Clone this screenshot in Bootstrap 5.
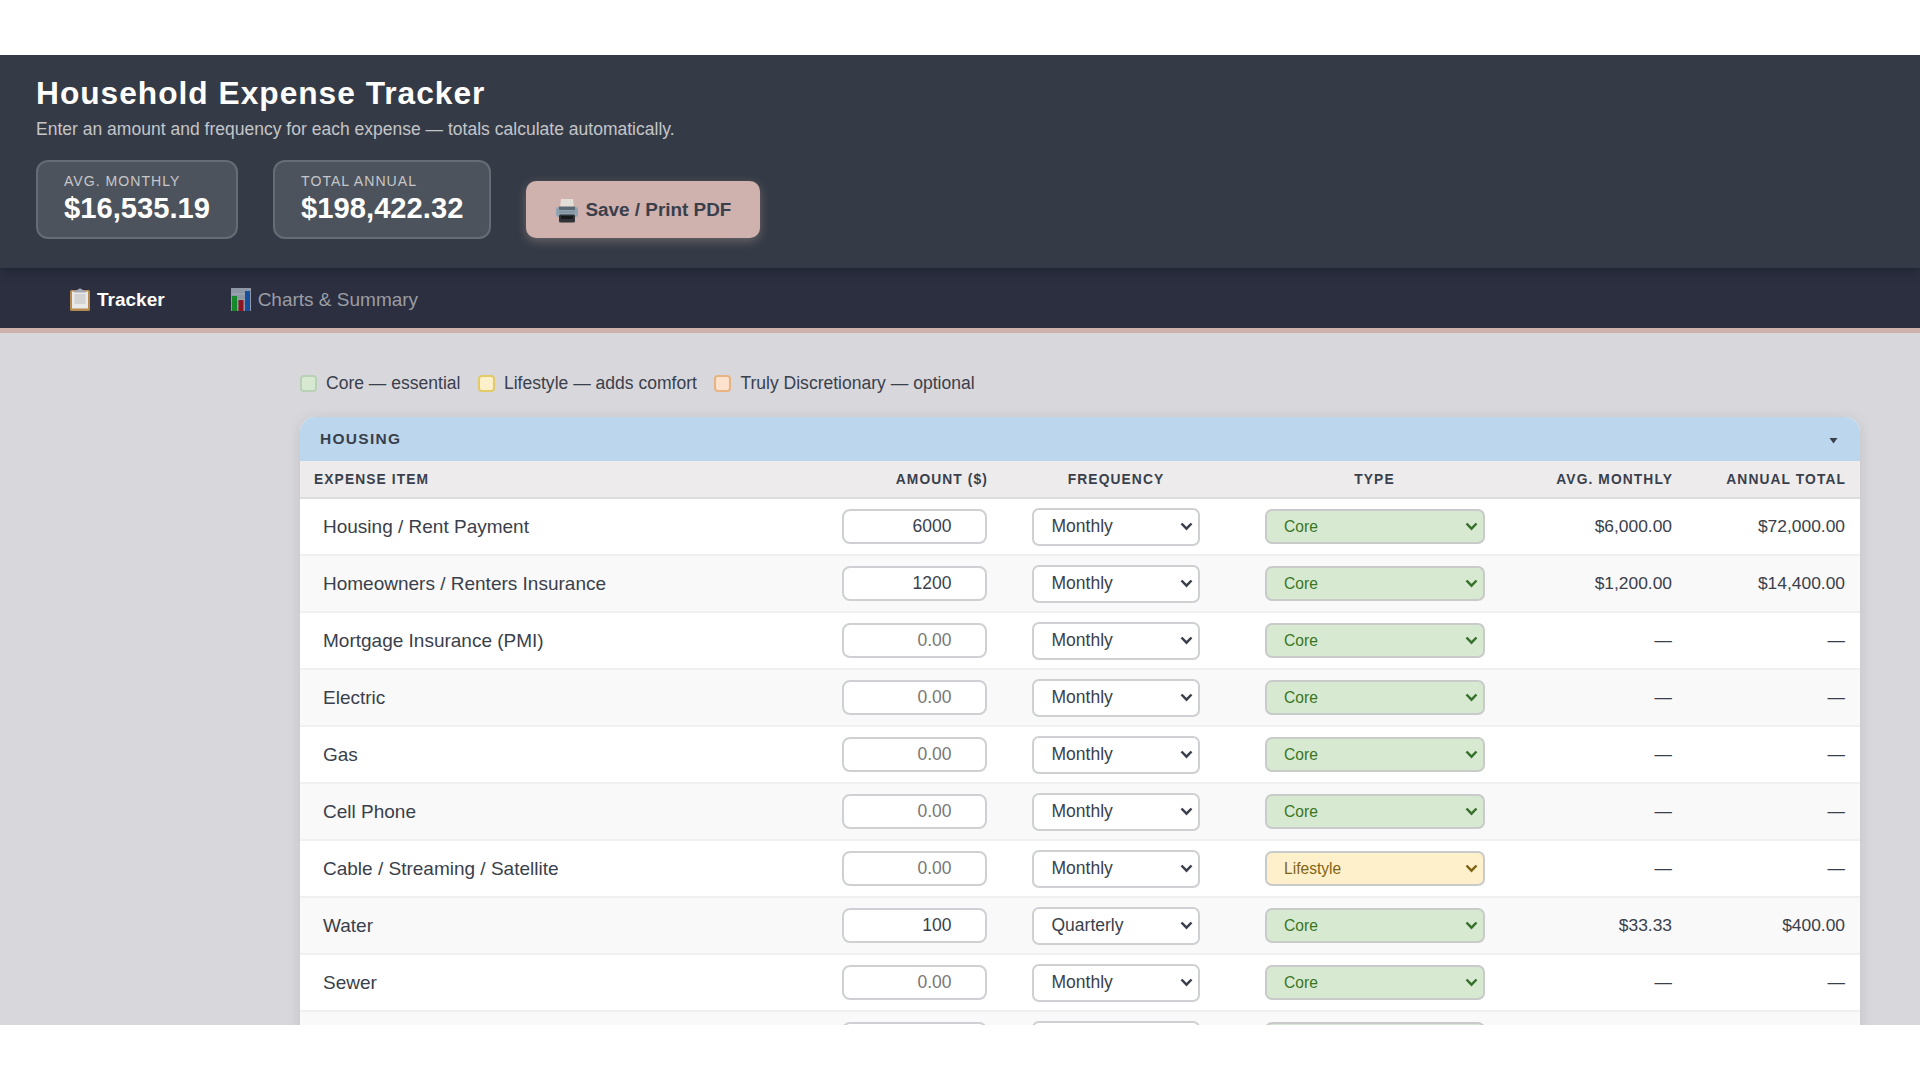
<!DOCTYPE html>
<html lang="en">
<head>
<meta charset="utf-8">
<title>Household Expense Tracker</title>
<link href="https://cdn.jsdelivr.net/npm/bootstrap@5.3.0/dist/css/bootstrap.min.css" rel="stylesheet">
<style>
body{font-family:"Liberation Sans",Arial,sans-serif;color:#3a3f4c;background:#fff;overflow:hidden}
.app-shell{margin-top:55px;height:970px;overflow:hidden;background:#d8d7dc}
.app-head{height:213px;padding:18px 36px 0;background:#353b46;box-shadow:0 3px 12px rgba(0,0,0,.26);position:relative;z-index:2}
.app-title{font-size:31.7px;line-height:40px;font-weight:700;letter-spacing:1px;color:#fff}
.app-sub{font-size:17.5px;line-height:20px;color:#c4c5c9;margin-top:6px;letter-spacing:.01px}
.stat-row{gap:35px;margin-top:21px}
.stat-box{height:79px;border:2px solid #676b74;border-radius:12px;background:#4d535c;padding:10px 26px 0}
.stat-label{font-size:14.1px;line-height:18px;letter-spacing:1px;color:#c6c7ca;white-space:nowrap}
.stat-value{font-size:29.2px;line-height:36px;font-weight:700;color:#fff}
.btn-print{width:234px;height:57px;border-radius:10px;background:#cfb1ad;color:#3a3f4c;font-size:18.9px;font-weight:700;box-shadow:0 3px 10px rgba(207,177,173,.35);padding:3px 0 0 29px;border:0;margin-bottom:1.5px;gap:6px}
.app-tabs{height:64.5px;background:#2b2f40;border-bottom:5px solid #cfb1ad;padding:4px 0 0 69px;gap:65px;font-size:19px}
.tab-on{color:#fff;font-weight:700;gap:6px}
.tab-off{color:#9b9da5;gap:6px}
.wrap-main{margin-left:300px;width:1560px;padding-top:40.5px}
.legend-row{height:20px;font-size:17.55px;gap:17.5px}
.swatch{width:17px;height:17px;border-radius:4px;border:2px solid;margin-right:9px}
.sw-core{background:#d8e9d1;border-color:#b9d1b6}
.sw-life{background:#fff0cc;border-color:#e2ca66}
.sw-disc{background:#fce2cc;border-color:#e8b383}
.cat-card{margin-top:24px;border-radius:15px 15px 0 0;overflow:hidden;box-shadow:0 2px 14px rgba(0,0,0,.1);background:#fff}
.cat-head{height:44px;background:#bcd7ed;padding:0 22px 0 20px;font-size:15.5px;font-weight:700;letter-spacing:1.3px}
.exp-table{table-layout:fixed;width:1560px;border-collapse:separate;border-spacing:0}
.exp-table th{height:38px;background:#edebec;border-bottom:2px solid #dddcdf;font-size:13.8px;letter-spacing:1.1px;padding:2px 14px 0;vertical-align:middle;white-space:nowrap}
.exp-table td{height:57px;border-bottom:2px solid #f0f0f1;padding:0 15px;vertical-align:middle;font-size:17.4px}
.exp-table tbody tr:nth-child(even){background:#f9f9f9}
.exp-table td.item-name{padding-left:23px;font-size:19px;padding-top:2px}
.exp-table .form-control{width:145px;height:35px;border:2px solid #cfd0d4;border-radius:8px;text-align:right;font-size:17.5px;padding:0 33.5px 0 8px;color:#3a3f4c;margin-left:auto;background:#fff;font-family:inherit}
.exp-table .form-control::placeholder{color:#777}
.exp-table .form-select{height:38px;width:168px;border:2px solid #cfd0d4;border-radius:7px;font-size:17.5px;padding:0 30px 0 17.5px;color:#3a3f4c;margin:0 auto;font-family:inherit;background-size:13px 9px;background-position:right 5px center;background-color:#fff;background-image:url("data:image/svg+xml,%3csvg xmlns='http://www.w3.org/2000/svg' viewBox='0 0 13 9'%3e%3cpath d='M1.500 1.500L6.500 6.700L11.500 1.500' fill='none' stroke='%233a3f4c' stroke-width='2.500'/%3e%3c/svg%3e")}
.exp-table .kind{width:220px;height:35px;font-size:15.6px;padding-left:17.5px;padding-top:1px;border-color:#c8cbca}
.exp-table .kind-core{background-color:#d8e9d1;color:#38761d;background-image:url("data:image/svg+xml,%3csvg xmlns='http://www.w3.org/2000/svg' viewBox='0 0 13 9'%3e%3cpath d='M1.500 1.500L6.500 6.700L11.500 1.500' fill='none' stroke='%2338702d' stroke-width='2.500'/%3e%3c/svg%3e")}
.exp-table .kind-life{background-color:#fff0cc;color:#7f6414;background-image:url("data:image/svg+xml,%3csvg xmlns='http://www.w3.org/2000/svg' viewBox='0 0 13 9'%3e%3cpath d='M1.500 1.500L6.500 6.700L11.500 1.500' fill='none' stroke='%237f6414' stroke-width='2.500'/%3e%3c/svg%3e")}
</style>
<script src="https://cdn.jsdelivr.net/npm/bootstrap@5.3.0/dist/js/bootstrap.bundle.min.js"></script>
</head>
<body>
<div class="app-shell">
  <header class="app-head">
    <h1 class="app-title mb-0">Household Expense Tracker</h1>
    <p class="app-sub mb-0">Enter an amount and frequency for each expense — totals calculate automatically.</p>
    <div class="stat-row d-flex align-items-end">
      <div class="stat-box"><div class="stat-label">AVG. MONTHLY</div><div class="stat-value">$16,535.19</div></div>
      <div class="stat-box"><div class="stat-label">TOTAL ANNUAL</div><div class="stat-value">$198,422.32</div></div>
      <button class="btn btn-print d-flex align-items-center" type="button">
        <svg width="24" height="24" viewBox="0 0 24 24">
          <path d="M6 0h12l1 9H5z" fill="#e3dfd8"/><rect x="1" y="8" width="22" height="10" rx="3" fill="#8ea2b1"/><rect x="4" y="7.500" width="16" height="3.500" fill="#5b6975"/><rect x="4" y="12" width="16" height="2" fill="#8696a0"/><rect x="4" y="15.500" width="16" height="8" rx="1.500" fill="#303438"/><rect x="6" y="17" width="12" height="3" fill="#17191b"/>
        </svg><span>Save / Print PDF</span></button>
    </div>
  </header>
  <nav class="app-tabs d-flex align-items-center">
    <div class="tab-on d-flex align-items-center">
      <svg width="22" height="24" viewBox="0 0 22 24">
        <rect x="1" y="2" width="20" height="21" rx="1.500" fill="#b58a50"/><rect x="3" y="3.500" width="16" height="17" fill="#e9e9e9"/><rect x="5.500" y="6" width="11" height="10" fill="#d3d3d3"/><path d="M5 4.500c0-2 3-2 4-3 1-1.300 3-1.300 4 0 1 1 4 1 4 3z" fill="#a5a9b4"/>
      </svg><span>Tracker</span></div>
    <div class="tab-off d-flex align-items-center">
      <svg width="22" height="24" viewBox="0 0 22 24">
        <rect x="1" width="20" height="23" fill="#8d97a6"/><path d="M1 6h20M1 12h20M1 18h20" stroke="#a3abb7" stroke-width="1"/><rect x="2" y="8" width="5" height="15" fill="#168a2b"/><rect x="8.500" y="12" width="5" height="11" fill="#8e1422"/><rect x="15" y="3" width="5" height="20" fill="#174f9c"/>
      </svg><span>Charts &amp; Summary</span></div>
  </nav>
  <main class="wrap-main">
    <div class="legend-row d-flex align-items-center">
      <div class="d-flex align-items-center"><i class="swatch sw-core"></i><span>Core — essential</span></div>
      <div class="d-flex align-items-center"><i class="swatch sw-life"></i><span>Lifestyle — adds comfort</span></div>
      <div class="d-flex align-items-center"><i class="swatch sw-disc"></i><span>Truly Discretionary — optional</span></div>
    </div>
    <section class="cat-card">
      <div class="cat-head d-flex align-items-center justify-content-between"><span>HOUSING</span>
        <svg width="9" height="6" viewBox="0 0 9 6" class="mt-1"><path d="M.5 0h8L4.500 5.500z" fill="#3a3f4c"/></svg></div>
      <table class="exp-table">
        <colgroup><col style="width:527px"><col style="width:175px"><col style="width:228px"><col style="width:289px"><col style="width:168px"><col style="width:173px"></colgroup>
        <thead><tr><th>EXPENSE ITEM</th><th class="text-end">AMOUNT ($)</th><th class="text-center">FREQUENCY</th><th class="text-center">TYPE</th><th class="text-end">AVG. MONTHLY</th><th class="text-end">ANNUAL TOTAL</th></tr></thead>
        <tbody id="expenseRows"></tbody>
      </table>
    </section>
  </main>
</div>
<script>
const expenses = [
  ["Housing / Rent Payment","6000","Monthly","Core","$6,000.00","$72,000.00"],
  ["Homeowners / Renters Insurance","1200","Monthly","Core","$1,200.00","$14,400.00"],
  ["Mortgage Insurance (PMI)","","Monthly","Core","—","—"],
  ["Electric","","Monthly","Core","—","—"],
  ["Gas","","Monthly","Core","—","—"],
  ["Cell Phone","","Monthly","Core","—","—"],
  ["Cable / Streaming / Satellite","","Monthly","Lifestyle","—","—"],
  ["Water","100","Quarterly","Core","$33.33","$400.00"],
  ["Sewer","","Monthly","Core","—","—"],
  ["","","Monthly","Core","",""]
];
document.getElementById("expenseRows").innerHTML = expenses.map(([name,amt,freq,kind,avg,total]) =>
  `<tr><td class="item-name">${name}</td>
   <td><input class="form-control" type="text" placeholder="0.00" value="${amt}"></td>
   <td><select class="form-select"><option>${freq}</option></select></td>
   <td><select class="form-select kind ${kind === "Core" ? "kind-core" : "kind-life"}"><option>${kind}</option></select></td>
   <td class="text-end">${avg}</td><td class="text-end">${total}</td></tr>`).join("");
</script>
</body>
</html>
